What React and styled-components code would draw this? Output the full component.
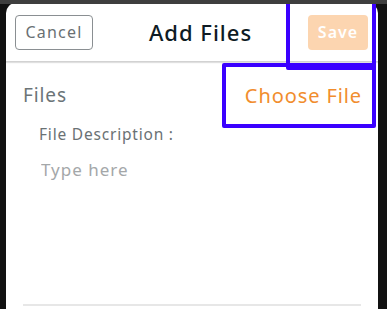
import React from "react";
import styled, { createGlobalStyle } from "styled-components";

const Global = createGlobalStyle`
  html, body { margin: 0; padding: 0; background: #111111; }
  body { font-family: "Noto Sans", "Open Sans", sans-serif; }
  * { box-sizing: border-box; }
`;

const Screen = styled.div`
  position: relative;
  width: 387px;
  height: 309px;
  overflow: hidden;
  background: #111111;
  border-top: 4px solid #3e3e3e;
  padding: 0 9px 0 6px;
  display: flex;
`;

const Sheet = styled.div`
  flex: 1;
  background: #ffffff;
  border-radius: 10px 10px 0 0;
  display: flex;
  flex-direction: column;
  margin-top: -1px;
`;

const Header = styled.header`
  height: 59px;
  display: flex;
  align-items: center;
  padding: 0 10px 0 9px;
  border-bottom: 1px solid #d2d2d2;
  box-shadow: 0 1px 1px rgba(0, 0, 0, 0.12);
`;

const Button = styled.button`
  height: 35px;
  width: ${(p) => p.$w}px;
  border-radius: 4px;
  font-family: "Noto Sans", sans-serif;
  font-size: 16px;
  padding: 0;
  cursor: pointer;
  border: ${(p) => (p.$primary ? "none" : "1px solid #8a8f92")};
  background: ${(p) => (p.$primary ? "#fcd5b0" : "#ffffff")};
  color: ${(p) => (p.$primary ? "#ffffff" : "#6a7073")};
  font-weight: ${(p) => (p.$primary ? 600 : 400)};
  letter-spacing: ${(p) => (p.$primary ? "1px" : "1.2px")};
`;

const Title = styled.h1`
  flex: 1;
  margin: 0;
  text-align: center;
  font-size: 22px;
  font-weight: 500;
  color: #0e1b24;
  letter-spacing: 1px;
`;

const Body = styled.div`
  flex: 1;
  display: flex;
  flex-direction: column;
  padding: 16px 16px 0 17px;
`;

const Row = styled.div`
  display: flex;
  justify-content: space-between;
  align-items: center;
  height: 34px;
`;

const Label = styled.span`
  font-size: 19px;
  color: #6b7477;
  letter-spacing: 0.9px;
`;

const Link = styled.span`
  font-size: 20px;
  color: #f18d2d;
  letter-spacing: 0.9px;
`;

const Field = styled.div`
  display: flex;
  flex-direction: column;
  padding-left: 16px;
  margin-top: 11px;
  gap: 13px;
`;

const FieldLabel = styled.label`
  font-size: 15.5px;
  color: #6a7174;
  letter-spacing: 0.8px;
`;

const Input = styled.input`
  border: none;
  outline: none;
  padding: 0 0 0 2px;
  font-family: "Noto Sans", sans-serif;
  font-size: 17px;
  letter-spacing: 1px;
  color: #333;
  background: transparent;
  &::placeholder { color: #a4a7a9; }
`;

const Spacer = styled.div`
  flex: 1;
`;

const Divider = styled.div`
  height: 2px;
  background: #e7e7e7;
  margin: 0 1px 3px 0;
`;

const Highlight = styled.div`
  position: absolute;
  border: 4px solid #3a00ff;
  border-radius: 2px;
  left: ${(p) => p.$x}px;
  top: ${(p) => p.$y}px;
  width: ${(p) => p.$w}px;
  height: ${(p) => p.$h}px;
  pointer-events: none;
`;

export default function App() {
  return (
    <>
      <Global />
      <Screen>
        <Sheet>
          <Header>
            <Button $w={78}>Cancel</Button>
            <Title>Add Files</Title>
            <Button $w={60} $primary>Save</Button>
          </Header>
          <Body>
            <Row>
              <Label>Files</Label>
              <Link>Choose File</Link>
            </Row>
            <Field>
              <FieldLabel>File Description :</FieldLabel>
              <Input placeholder="Type here" />
            </Field>
            <Spacer />
            <Divider />
          </Body>
        </Sheet>
        <Highlight $x={286} $y={-6} $w={90} $h={72} />
        <Highlight $x={222} $y={59} $w={154} $h={65} />
      </Screen>
    </>
  );
}
